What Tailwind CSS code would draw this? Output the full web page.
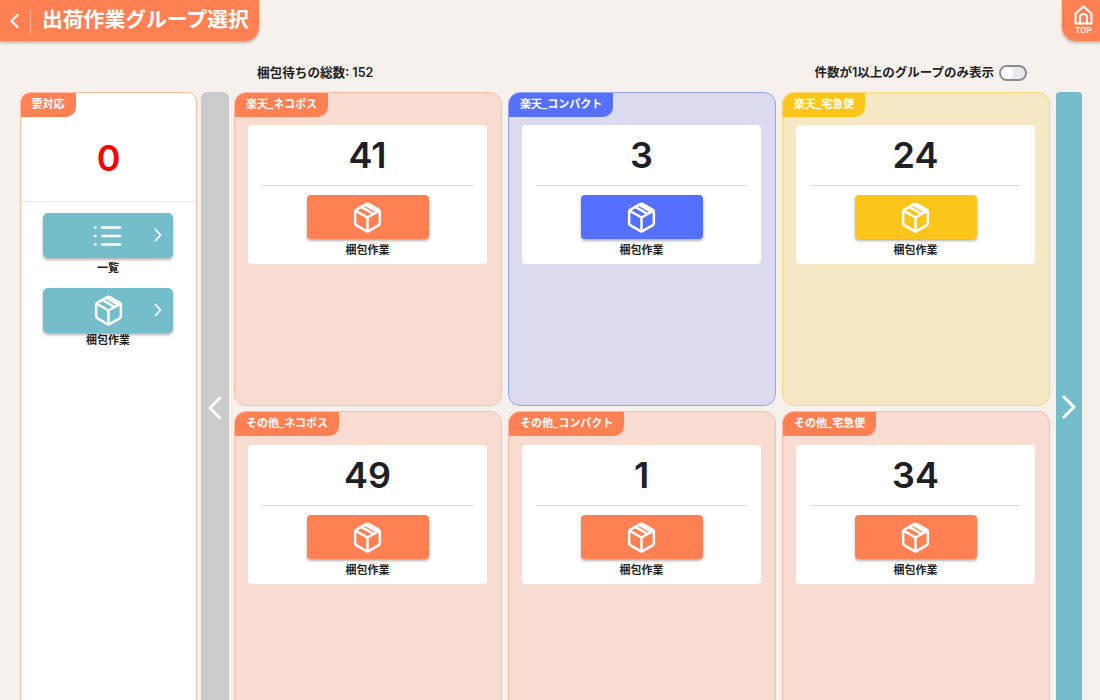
<!DOCTYPE html>
<html lang="ja">
<head>
<meta charset="utf-8">
<script src="https://cdn.jsdelivr.net/npm/@tailwindcss/browser@4"></script>
</head>
<body class="bg-[#f6f1ed] font-['Inter','Noto_Sans_CJK_JP',sans-serif] text-[#222]">
<div class="h-[700px] w-[1100px] overflow-hidden flex flex-col">
  <header class="h-[41px] flex justify-between items-start shrink-0">
    <div class="h-[41px] w-[259px] bg-[#ff8052] rounded-br-[14px] shadow-[0_2px_3px_rgba(0,0,0,0.25)] flex items-center text-white">
      <svg class="ml-[8px] w-[12px] h-[16px]" viewBox="0 0 12 16" fill="none" stroke="white" stroke-width="2.2" stroke-linecap="round" stroke-linejoin="round"><path d="M9.5 2 3.5 8l6 6"/></svg>
      <div class="ml-[10px] w-px h-[24px] bg-white/40"></div>
      <h1 class="ml-[11px] text-[20.8px] font-semibold leading-none whitespace-nowrap">出荷作業グループ選択</h1>
    </div>
    <div class="h-[41px] w-[38px] bg-[#ff8052] rounded-bl-[14px] shadow-[0_2px_3px_rgba(0,0,0,0.25)] flex flex-col items-center pt-[5px] pl-[5px] text-white">
      <svg class="w-[19px] h-[20px]" viewBox="0 0 19 20" fill="none" stroke="white" stroke-width="2" stroke-linejoin="round" stroke-linecap="round"><path d="M1.500 8.500 9.500 1.500 17.500 8.500V18.500h-16Z"/><path d="M6 18.500v-6a3.500 3.500 0 0 1 7 0v6"/></svg>
      <span class="text-[8px] font-semibold leading-[8px] mt-[1px]">TOP</span>
    </div>
  </header>
  <div class="h-[51px] shrink-0 pl-[257px] pr-[73px] pt-[24px] flex justify-between items-start">
    <span class="text-[12.600px] font-semibold leading-[16px] whitespace-nowrap">梱包待ちの総数: 152</span>
    <div class="flex items-center gap-[5px] h-[16px]">
      <span class="text-[12.500px] font-semibold leading-[16px] whitespace-nowrap">件数が1以上のグループのみ表示</span>
      <div class="w-[28px] h-[16px] rounded-full bg-[#e8e8ee] border-2 border-[#8b8b90] flex items-center">
        <div class="w-[12px] h-[12px] rounded-full bg-white"></div>
      </div>
    </div>
  </div>
  <main class="flex-1 min-h-0 pl-[20px] flex items-start">
    <aside class="w-[177px] h-[640px] shrink-0 bg-white border border-[#ffbca5] rounded-[10px] overflow-hidden">
      <div class="w-[56px] h-[25px] -mt-px -ml-px bg-[#ff8052] rounded-br-[10px] text-white text-[11px] font-semibold flex items-center justify-center">要対応</div>
      <div class="h-[85px] border-b border-[#e5e7eb] flex items-center justify-center text-[#ff0000] text-[36px] font-semibold leading-none pb-[2px]">0</div>
      <div class="flex flex-col items-center pt-[11px] pr-px gap-[10px]">
        <div class="flex flex-col items-center">
          <div class="relative w-[130px] h-[45px] bg-[#74bdcb] rounded-[5px] shadow-[0_2px_3px_rgba(0,0,0,0.3)] flex items-center justify-center">
            <svg class="w-[30px] h-[30px]" viewBox="0 0 30 30" fill="none" stroke="white" stroke-width="2.400" stroke-linecap="round"><path d="M9 6.500h18M9 15h18M9 23.500h18"/><path d="M2 6.500h.6M2 15h.6M2 23.500h.6"/></svg>
            <svg class="absolute right-[11px] top-[15px] w-[8px] h-[14px]" viewBox="0 0 8 14" fill="none" stroke="white" stroke-width="1.800" stroke-linecap="round" stroke-linejoin="round"><path d="m1.500 1.500 5 5.500-5 5.500"/></svg>
          </div>
          <span class="text-[11px] font-semibold leading-[20px] h-[20px]">一覧</span>
        </div>
        <div class="flex flex-col items-center">
          <div class="relative w-[130px] h-[45px] bg-[#74bdcb] rounded-[5px] shadow-[0_2px_3px_rgba(0,0,0,0.3)] flex items-center justify-center">
            <svg class="w-[33px] h-[33px]" viewBox="0 0 24 24" fill="none" stroke="white" stroke-width="1.800" stroke-linecap="round" stroke-linejoin="round"><path d="m7.500 4.270 9 5.150M10.500 2.800l8.800 5.100"/><path d="M21 8a2 2 0 0 0-1-1.730l-7-4a2 2 0 0 0-2 0l-7 4A2 2 0 0 0 3 8v8a2 2 0 0 0 1 1.730l7 4a2 2 0 0 0 2 0l7-4A2 2 0 0 0 21 16Z"/><path d="m3.300 7 8.700 5 8.700-5"/><path d="M12 22V12"/></svg>
            <svg class="absolute right-[11px] top-[15px] w-[8px] h-[14px]" viewBox="0 0 8 14" fill="none" stroke="white" stroke-width="1.800" stroke-linecap="round" stroke-linejoin="round"><path d="m1.500 1.500 5 5.500-5 5.500"/></svg>
          </div>
          <span class="text-[11px] font-semibold leading-[14px]">梱包作業</span>
        </div>
      </div>
    </aside>
    <div class="ml-[4px] w-[28px] h-[640px] shrink-0 bg-[#cbcbcb] rounded-t-[6px] flex items-center justify-center">
      <svg class="w-[16px] h-[26px] mb-[8px]" viewBox="0 0 16 26" fill="none" stroke="white" stroke-width="3" stroke-linecap="round" stroke-linejoin="round"><path d="M13 3 3 13l10 10"/></svg>
    </div>
    <section class="ml-[5px] w-[816px] shrink-0 grid grid-cols-[268px_268px_268px] gap-x-[6px] gap-y-[5px]">
      <article class="h-[314px] rounded-[12px] border border-[#ffbca5] bg-[#f9dcd1] overflow-hidden">
        <div class="w-fit h-[25px] -mt-px -ml-px pl-[12px] pr-[11px] bg-[#ff8052] rounded-br-[10px] text-white text-[11px] font-semibold flex items-center">楽天_ネコポス</div>
        <div class="ml-[13px] mr-[14px] mt-[8px] h-[139px] bg-white rounded-[4px] flex flex-col items-center">
          <div class="text-[36px] font-semibold leading-none mt-[12px] h-[48px] text-[#1f2025]">41</div>
          <div class="w-[211px] h-px bg-[#d9d9de]"></div>
          <div class="mt-[9px] w-[122px] h-[44px] bg-[#ff8052] rounded-[4px] shadow-[0_2px_3px_rgba(0,0,0,0.3)] flex items-center justify-center"><svg class="w-[33px] h-[33px]" viewBox="0 0 24 24" fill="none" stroke="white" stroke-width="1.800" stroke-linecap="round" stroke-linejoin="round"><path d="m7.500 4.270 9 5.150M10.500 2.800l8.800 5.100"/><path d="M21 8a2 2 0 0 0-1-1.730l-7-4a2 2 0 0 0-2 0l-7 4A2 2 0 0 0 3 8v8a2 2 0 0 0 1 1.730l7 4a2 2 0 0 0 2 0l7-4A2 2 0 0 0 21 16Z"/><path d="m3.300 7 8.700 5 8.700-5"/><path d="M12 22V12"/></svg></div>
          <span class="text-[11px] font-semibold leading-[14px] mt-[4px]">梱包作業</span>
        </div>
      </article>
      <article class="h-[314px] rounded-[12px] border border-[#95a3f5] bg-[#dbdbf0] overflow-hidden">
        <div class="w-fit h-[25px] -mt-px -ml-px pl-[12px] pr-[11px] bg-[#5570ff] rounded-br-[10px] text-white text-[11px] font-semibold flex items-center">楽天_コンパクト</div>
        <div class="ml-[13px] mr-[14px] mt-[8px] h-[139px] bg-white rounded-[4px] flex flex-col items-center">
          <div class="text-[36px] font-semibold leading-none mt-[12px] h-[48px] text-[#1f2025]">3</div>
          <div class="w-[211px] h-px bg-[#d9d9de]"></div>
          <div class="mt-[9px] w-[122px] h-[44px] bg-[#5570ff] rounded-[4px] shadow-[0_2px_3px_rgba(0,0,0,0.3)] flex items-center justify-center"><svg class="w-[33px] h-[33px]" viewBox="0 0 24 24" fill="none" stroke="white" stroke-width="1.800" stroke-linecap="round" stroke-linejoin="round"><path d="m7.500 4.270 9 5.150M10.500 2.800l8.800 5.100"/><path d="M21 8a2 2 0 0 0-1-1.730l-7-4a2 2 0 0 0-2 0l-7 4A2 2 0 0 0 3 8v8a2 2 0 0 0 1 1.730l7 4a2 2 0 0 0 2 0l7-4A2 2 0 0 0 21 16Z"/><path d="m3.300 7 8.700 5 8.700-5"/><path d="M12 22V12"/></svg></div>
          <span class="text-[11px] font-semibold leading-[14px] mt-[4px]">梱包作業</span>
        </div>
      </article>
      <article class="h-[314px] rounded-[12px] border border-[#fbd67a] bg-[#f7e8c5] overflow-hidden">
        <div class="w-fit h-[25px] -mt-px -ml-px pl-[12px] pr-[11px] bg-[#fbc619] rounded-br-[10px] text-white text-[11px] font-semibold flex items-center">楽天_宅急便</div>
        <div class="ml-[13px] mr-[14px] mt-[8px] h-[139px] bg-white rounded-[4px] flex flex-col items-center">
          <div class="text-[36px] font-semibold leading-none mt-[12px] h-[48px] text-[#1f2025]">24</div>
          <div class="w-[211px] h-px bg-[#d9d9de]"></div>
          <div class="mt-[9px] w-[122px] h-[44px] bg-[#fbc619] rounded-[4px] shadow-[0_2px_3px_rgba(0,0,0,0.3)] flex items-center justify-center"><svg class="w-[33px] h-[33px]" viewBox="0 0 24 24" fill="none" stroke="white" stroke-width="1.800" stroke-linecap="round" stroke-linejoin="round"><path d="m7.500 4.270 9 5.150M10.500 2.800l8.800 5.100"/><path d="M21 8a2 2 0 0 0-1-1.730l-7-4a2 2 0 0 0-2 0l-7 4A2 2 0 0 0 3 8v8a2 2 0 0 0 1 1.730l7 4a2 2 0 0 0 2 0l7-4A2 2 0 0 0 21 16Z"/><path d="m3.300 7 8.700 5 8.700-5"/><path d="M12 22V12"/></svg></div>
          <span class="text-[11px] font-semibold leading-[14px] mt-[4px]">梱包作業</span>
        </div>
      </article>
      <article class="h-[314px] rounded-[12px] border border-[#ffbca5] bg-[#f9dcd1] overflow-hidden">
        <div class="w-fit h-[25px] -mt-px -ml-px pl-[12px] pr-[11px] bg-[#ff8052] rounded-br-[10px] text-white text-[11px] font-semibold flex items-center">その他_ネコポス</div>
        <div class="ml-[13px] mr-[14px] mt-[9px] h-[139px] bg-white rounded-[4px] flex flex-col items-center">
          <div class="text-[36px] font-semibold leading-none mt-[12px] h-[48px] text-[#1f2025]">49</div>
          <div class="w-[211px] h-px bg-[#d9d9de]"></div>
          <div class="mt-[9px] w-[122px] h-[44px] bg-[#ff8052] rounded-[4px] shadow-[0_2px_3px_rgba(0,0,0,0.3)] flex items-center justify-center"><svg class="w-[33px] h-[33px]" viewBox="0 0 24 24" fill="none" stroke="white" stroke-width="1.800" stroke-linecap="round" stroke-linejoin="round"><path d="m7.500 4.270 9 5.150M10.500 2.800l8.800 5.100"/><path d="M21 8a2 2 0 0 0-1-1.730l-7-4a2 2 0 0 0-2 0l-7 4A2 2 0 0 0 3 8v8a2 2 0 0 0 1 1.730l7 4a2 2 0 0 0 2 0l7-4A2 2 0 0 0 21 16Z"/><path d="m3.300 7 8.700 5 8.700-5"/><path d="M12 22V12"/></svg></div>
          <span class="text-[11px] font-semibold leading-[14px] mt-[4px]">梱包作業</span>
        </div>
      </article>
      <article class="h-[314px] rounded-[12px] border border-[#ffbca5] bg-[#f9dcd1] overflow-hidden">
        <div class="w-fit h-[25px] -mt-px -ml-px pl-[12px] pr-[11px] bg-[#ff8052] rounded-br-[10px] text-white text-[11px] font-semibold flex items-center">その他_コンパクト</div>
        <div class="ml-[13px] mr-[14px] mt-[9px] h-[139px] bg-white rounded-[4px] flex flex-col items-center">
          <div class="text-[36px] font-semibold leading-none mt-[12px] h-[48px] text-[#1f2025]">1</div>
          <div class="w-[211px] h-px bg-[#d9d9de]"></div>
          <div class="mt-[9px] w-[122px] h-[44px] bg-[#ff8052] rounded-[4px] shadow-[0_2px_3px_rgba(0,0,0,0.3)] flex items-center justify-center"><svg class="w-[33px] h-[33px]" viewBox="0 0 24 24" fill="none" stroke="white" stroke-width="1.800" stroke-linecap="round" stroke-linejoin="round"><path d="m7.500 4.270 9 5.150M10.500 2.800l8.800 5.100"/><path d="M21 8a2 2 0 0 0-1-1.730l-7-4a2 2 0 0 0-2 0l-7 4A2 2 0 0 0 3 8v8a2 2 0 0 0 1 1.730l7 4a2 2 0 0 0 2 0l7-4A2 2 0 0 0 21 16Z"/><path d="m3.300 7 8.700 5 8.700-5"/><path d="M12 22V12"/></svg></div>
          <span class="text-[11px] font-semibold leading-[14px] mt-[4px]">梱包作業</span>
        </div>
      </article>
      <article class="h-[314px] rounded-[12px] border border-[#ffbca5] bg-[#f9dcd1] overflow-hidden">
        <div class="w-fit h-[25px] -mt-px -ml-px pl-[12px] pr-[11px] bg-[#ff8052] rounded-br-[10px] text-white text-[11px] font-semibold flex items-center">その他_宅急便</div>
        <div class="ml-[13px] mr-[14px] mt-[9px] h-[139px] bg-white rounded-[4px] flex flex-col items-center">
          <div class="text-[36px] font-semibold leading-none mt-[12px] h-[48px] text-[#1f2025]">34</div>
          <div class="w-[211px] h-px bg-[#d9d9de]"></div>
          <div class="mt-[9px] w-[122px] h-[44px] bg-[#ff8052] rounded-[4px] shadow-[0_2px_3px_rgba(0,0,0,0.3)] flex items-center justify-center"><svg class="w-[33px] h-[33px]" viewBox="0 0 24 24" fill="none" stroke="white" stroke-width="1.800" stroke-linecap="round" stroke-linejoin="round"><path d="m7.500 4.270 9 5.150M10.500 2.800l8.800 5.100"/><path d="M21 8a2 2 0 0 0-1-1.730l-7-4a2 2 0 0 0-2 0l-7 4A2 2 0 0 0 3 8v8a2 2 0 0 0 1 1.730l7 4a2 2 0 0 0 2 0l7-4A2 2 0 0 0 21 16Z"/><path d="m3.300 7 8.700 5 8.700-5"/><path d="M12 22V12"/></svg></div>
          <span class="text-[11px] font-semibold leading-[14px] mt-[4px]">梱包作業</span>
        </div>
      </article>
    </section>
    <div class="ml-[6px] w-[26px] h-[640px] shrink-0 bg-[#74bdcb] rounded-t-[4px] flex items-center justify-center">
      <svg class="w-[16px] h-[26px] mb-[10px]" viewBox="0 0 16 26" fill="none" stroke="white" stroke-width="3" stroke-linecap="round" stroke-linejoin="round"><path d="m3 3 10 10L3 23"/></svg>
    </div>
  </main>
</div>
</body>
</html>
